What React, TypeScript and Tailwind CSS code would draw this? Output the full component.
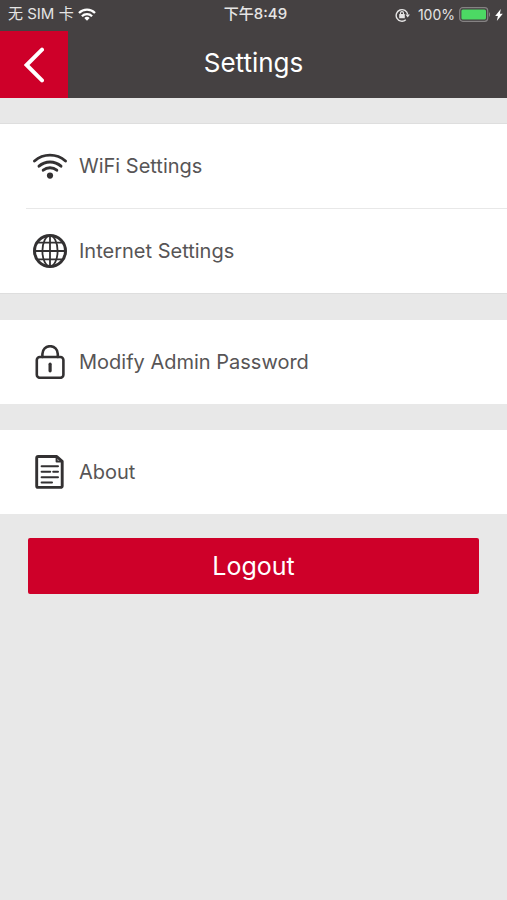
import type { ReactNode } from "react";

const WifiIcon = () => (
  <svg viewBox="0 0 34 34" className="h-[34px] w-[34px]" fill="none" stroke="#333132" strokeWidth="2.9" strokeLinecap="round">
    <path d="M1.5 12a23.5 23.5 0 0 1 31 0" />
    <path d="M6 17.2a16.4 16.4 0 0 1 22 0" />
    <path d="M10.2 21.2a10.6 10.6 0 0 1 13.6 0" />
    <circle cx="17" cy="26.6" r="3.1" fill="#333132" stroke="none" />
  </svg>
);

const GlobeIcon = () => (
  <svg viewBox="0 0 34 34" className="h-[34px] w-[34px]" fill="none" stroke="#333132" strokeWidth="1.8">
    <circle cx="17" cy="17" r="15.5" strokeWidth="3" />
    <ellipse cx="17" cy="17" rx="7.6" ry="15.4" />
    <path d="M17 1.5v31M1.5 17h31M4.4 8.6h25.2M4.4 25.4h25.2" />
  </svg>
);

const LockIcon = () => (
  <svg viewBox="0 0 34 34" className="h-[34px] w-[34px]" fill="none" stroke="#333132" strokeWidth="2.6" strokeLinecap="round">
    <rect x="3.8" y="12" width="26.6" height="20.8" rx="3" />
    <path d="M9.4 12V8.9a7.7 7.7 0 0 1 15.4 0V12" />
    <path d="M17.1 19.2v6.6" strokeWidth="3.2" />
  </svg>
);

const DocumentIcon = () => (
  <svg viewBox="0 0 34 34" className="h-[34px] w-[34px]" fill="none" stroke="#333132" strokeWidth="2.9" strokeLinecap="round" strokeLinejoin="round">
    <path d="M5.2 1.5h18.6l5.4 4.8v24.6a1.5 1.5 0 0 1-1.5 1.5H5.2a1.5 1.5 0 0 1-1.5-1.5V3a1.5 1.5 0 0 1 1.5-1.5z" />
    <path d="M23.6 2v4.6H29" strokeWidth="2" />
    <path d="M8.6 11.2h16.4M8.6 16.8h8.6M20.2 16.8H25M8.6 22.2H25M8.6 27.6h10.4" strokeWidth="2" />
  </svg>
);

const StatusBar = () => (
  <div className="grid h-[31px] grid-cols-[1fr_auto_1fr] items-center px-2 pb-0.5 text-[15px] text-[#e6e5e5]">
    <div className="flex items-center gap-1">
      <span>无 SIM 卡</span>
      <svg viewBox="0 0 18 13" className="h-[13px] w-[18px]" fill="none" stroke="#fff" strokeWidth="2.3">
        <path d="M1 5a11.4 11.4 0 0 1 16 0" />
        <path d="M3.9 8.2a7.3 7.3 0 0 1 10.2 0" />
        <path d="M9 12.8L6.3 10a3.9 3.9 0 0 1 5.4 0z" fill="#fff" stroke="none" />
      </svg>
    </div>
    <span className="pl-1 font-medium">下午8:49</span>
    <div className="-mr-1 flex items-center justify-end gap-1">
      {/* rotation lock */}
      <svg viewBox="0 0 15 14" className="mr-1 h-[14px] w-[15px]" fill="none" stroke="#e6e5e5" strokeWidth="1.4">
        <path d="M10.8 11.8a5.8 5.8 0 1 1 1.9-5.3" />
        <path d="M10.5 6.5h4.4l-2.2 3z" fill="#e6e5e5" stroke="none" />
        <rect x="4.2" y="6" width="5.6" height="4.2" rx="0.5" fill="#e6e5e5" stroke="none" />
        <path d="M5.5 6.4V5.1a1.5 1.5 0 0 1 3 0v1.3" strokeWidth="1.1" />
      </svg>
      <span className="text-sm">100%</span>
      <svg viewBox="0 0 32 15" className="h-[15px] w-[32px]">
        <rect x="0.7" y="0.7" width="28" height="13.6" rx="3" fill="none" stroke="#858283" strokeWidth="1.2" />
        <rect x="2.4" y="2.4" width="24.6" height="10.2" rx="1.5" fill="#4cd964" />
        <path d="M30 5.2c1.4.5 1.4 4.1 0 4.6z" fill="#858283" />
      </svg>
      <svg viewBox="0 0 8 12" className="h-3 w-2" fill="#fff">
        <path d="M5.8 0L.2 7h2.7L1.8 12l6-7.2H4.9z" />
      </svg>
    </div>
  </div>
);

const Row = ({ icon, label }: { icon: ReactNode; label: string }) => (
  <a href="#" className="flex h-[84px] items-center gap-3 pl-[33px] text-xl text-[#575556]">
    {icon}
    {label}
  </a>
);

export default function App() {
  return (
    <div className="min-h-screen bg-[#e8e8e8] font-['Inter','Noto_Sans_CJK_SC',sans-serif]">
      <header className="bg-[#454142] text-white">
        <StatusBar />
        <div className="grid grid-cols-[68px_1fr_68px] items-center">
          <button type="button" aria-label="Back" className="flex h-[67px] items-center justify-center bg-[#ce0029]">
            <svg viewBox="0 0 20 36" className="h-9 w-5" fill="none" stroke="#fff" strokeWidth="4" strokeLinecap="round">
              <path d="M18 2.6L2.6 18 18 33.4" />
            </svg>
          </button>
          <h1 className="pb-1 text-center text-[26px] leading-8">Settings</h1>
        </div>
      </header>

      <nav className="flex flex-col gap-[26px] pt-[25px]">
        <div className="border-y border-[#dedede] bg-white">
          <Row icon={<WifiIcon />} label="WiFi Settings" />
          <hr className="ml-[26px] border-[#e8e8e8]" />
          <Row icon={<GlobeIcon />} label="Internet Settings" />
        </div>
        <div className="bg-white">
          <Row icon={<LockIcon />} label="Modify Admin Password" />
        </div>
        <div className="bg-white">
          <Row icon={<DocumentIcon />} label="About" />
        </div>
      </nav>

      <div className="px-7 py-6">
        <button type="button" className="h-14 w-full rounded-xs bg-[#ce0029] pt-0.5 text-[25px] text-white">
          Logout
        </button>
      </div>
    </div>
  );
}
